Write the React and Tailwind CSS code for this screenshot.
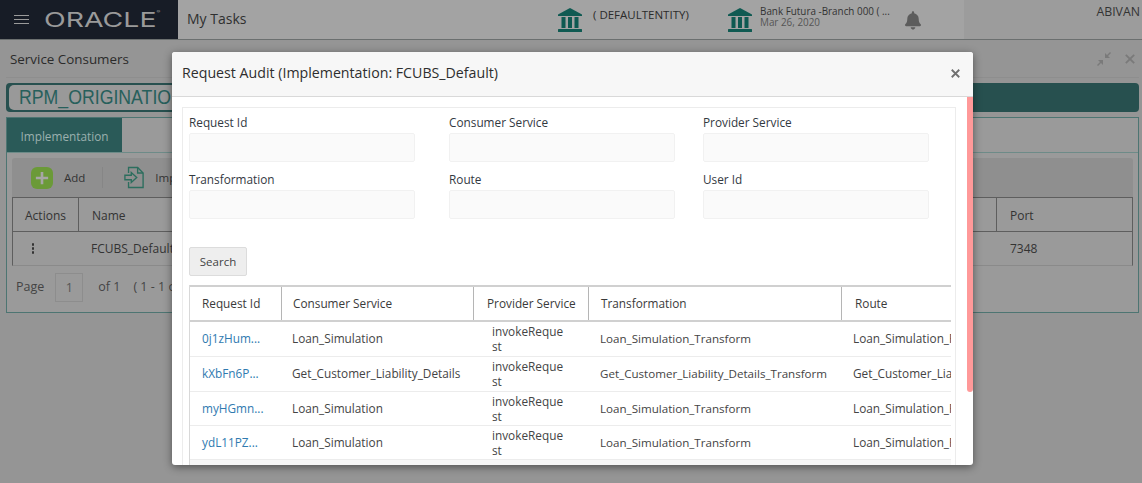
import React from "react";
import { FaBell } from "react-icons/fa";

function Bank({ className }) {
  return (
    <svg viewBox="0 0 26 24" className={className} fill="#0f5a52">
      <path d="M13 0 L25 6.5 V8 H1 V6.5 Z" />
      <rect x="4.5" y="9" width="4" height="11" />
      <rect x="11" y="9" width="4" height="11" />
      <rect x="17.5" y="9" width="4" height="11" />
      <rect x="1" y="21" width="24" height="3" rx="0.5" />
    </svg>
  );
}

const columns = "grid-cols-[91px_192px_115px_253px_110px]";
const rows = [
  ["0j1zHum...", "Loan_Simulation", "Loan_Simulation_Transform", "Loan_Simulation_Route", "h-[35px]"],
  ["kXbFn6P...", "Get_Customer_Liability_Details", "Get_Customer_Liability_Details_Transform", "Get_Customer_Liability", "h-[35px]"],
  ["myHGmn...", "Loan_Simulation", "Loan_Simulation_Transform", "Loan_Simulation_Route", "h-[34px]"],
  ["ydL11PZ...", "Loan_Simulation", "Loan_Simulation_Transform", "Loan_Simulation_Route", "h-[34px]"],
];

function Field({ label }) {
  return (
    <div>
      <div className="h-[21px] pt-[1px] text-[11.8px] leading-[18px] text-[#33393f]">{label}</div>
      <div className="h-[29px] w-[226px] rounded-[2px] border border-[#f1f1f1] bg-[#fafafa]" />
    </div>
  );
}

export default function App() {
  return (
    <div className="relative h-[483px] w-[1142px] overflow-hidden bg-[#959595] font-['Open_Sans',sans-serif] text-[#2b2b2b]">
      <header className="flex h-[40px] border-b border-[#6b6f6f] bg-[#a3a3a3]">
        <div className="flex w-[178px] shrink-0 items-center bg-[#171c26] pl-[14px]">
          <div className="flex w-[15px] flex-col gap-[2.5px]">
            <span className="h-[1.5px] bg-[#9a9a9a]" />
            <span className="h-[1.5px] bg-[#9a9a9a]" />
            <span className="h-[1.5px] bg-[#9a9a9a]" />
          </div>
          <span className="ml-[15px] origin-left scale-x-[1.42] font-['Inter',sans-serif] text-[20px] font-normal leading-none text-[#9a9a9a]">ORACLE<span className="align-top text-[4px]">®</span></span>
        </div>
        <div className="w-[370px] pl-[9px] pt-[8px] text-[14px] leading-[22px] text-[#2f3030]">My Tasks</div>
        <div className="flex w-[179px] items-start pl-[9px] pt-[8px]">
          <Bank className="h-[24px] w-[26px]" />
          <span className="ml-[10px] text-[11.5px] leading-[14px]">( DEFAULTENTITY)</span>
        </div>
        <div className="flex w-[178px] items-start pt-[8px]">
          <Bank className="h-[24px] w-[26px]" />
          <div className="-mt-[2px] ml-[7px] w-[140px] whitespace-nowrap text-[9.9px] leading-[11px] text-[#333]">
            <div>Bank Futura -Branch 000  ( ...</div>
            <div className="text-[#555]">Mar 26, 2020</div>
          </div>
        </div>
        <div className="pt-[11px]">
          <FaBell className="h-[19px] w-[16px] text-[#5c5c5c]" />
        </div>
        <div className="ml-[43px] flex-1 bg-[#9c9c9c] pr-[2px] pt-[4px] text-right text-[12.3px] leading-[16px] text-[#333]">ABIVAN</div>
      </header>

      <main className="flex flex-col pl-[6px] pr-[3px]">
        <div className="flex h-[38px] items-center justify-between border-b border-[#8e8e8e] pl-[4px] pr-[4px]">
          <span className="pt-[2px] text-[13.4px] text-[#2b2b2b]">Service Consumers</span>
          <div className="flex items-center gap-[13px]">
            <svg viewBox="0 0 16 16" className="h-[16px] w-[16px]" fill="#7a7a7a">
              <path d="M9 7 V2 L11 4 L14 1 L15 2 L12 5 L14 7 Z" />
              <path d="M7 9 V14 L5 12 L2 15 L1 14 L4 11 L2 9 Z" />
            </svg>
            <svg viewBox="0 0 12 12" className="h-[10px] w-[10px]" stroke="#7a7a7a" strokeWidth="2.2">
              <path d="M1 1 L11 11 M11 1 L1 11" />
            </svg>
          </div>
        </div>

        <div className="mt-[5px] h-[29px] rounded-[4px] bg-[#27504f] py-[2px] pl-[3px]">
          <div className="h-[25px] w-[300px] rounded-[5px] bg-[#999] pl-[10px] font-['Liberation_Sans',sans-serif] text-[20px] leading-[25px] text-[#27605c]">
            <span className="block origin-left scale-x-[0.885]">RPM_ORIGINATION</span>
          </div>
        </div>

        <section className="mt-[5px] flex h-[196px] flex-col border border-[#4d7572] bg-[#9a9a9a]">
          <div className="h-[35px] border-b border-[#6d8b88]">
            <div className="flex h-[34px] w-[115px] items-center justify-center bg-[#2a5a58] pt-[3px] text-[11.8px] text-[#9bb0ae]">Implementation</div>
          </div>
          <div className="px-[5px] pt-[5px]">
            <div className="flex h-[39px] items-center rounded-t-[3px] bg-[#8f8f8f] pl-[19px]">
              <div className="flex h-[22px] w-[22px] items-center justify-center rounded-[6px] bg-[#6b9a38]">
                <svg viewBox="0 0 16 16" className="h-[14px] w-[14px]" stroke="#a6a6a6" strokeWidth="3"><path d="M8 1 V15 M1 8 H15" /></svg>
              </div>
              <span className="ml-[11px] text-[11.5px] text-[#333]">Add</span>
              <span className="ml-[17px] h-[21px] w-px bg-[#868686]" />
              <svg viewBox="0 0 22 24" className="ml-[21px] h-[23px] w-[20px]" fill="none" stroke="#2c6e5e" strokeWidth="1.5">
                <path d="M5 7 V1 H15 L21 7 V23 H5 V17" />
                <path d="M15 1 V7 H21" />
                <path d="M1 9.5 H8 V6.5 L14 12 L8 17.5 V14.5 H1 Z" />
              </svg>
              <span className="ml-[11px] text-[11.5px] text-[#333]">Import</span>
            </div>
            <div className="flex h-[35px] items-center border border-[#5e5e5e] text-[12px] text-[#333]">
              <div className="flex h-full w-[66px] items-center justify-center border-r border-[#5e5e5e] pt-[2px]">Actions</div>
              <div className="flex-1 pl-[13px] pt-[2px]">Name</div>
              <div className="flex h-full w-[136px] items-center border-l border-[#5e5e5e] pl-[13px] pt-[2px]">Port</div>
            </div>
            <div className="flex h-[34px] items-center border-x border-b border-x-[#5e5e5e] border-b-[#8a8a8a] text-[12px] text-[#333]">
              <div className="flex w-[66px] justify-center pr-[26px]">
                <div className="flex flex-col gap-[1.5px]">
                  <span className="h-[2.5px] w-[2.5px] rounded-full bg-[#333]" />
                  <span className="h-[2.5px] w-[2.5px] rounded-full bg-[#333]" />
                  <span className="h-[2.5px] w-[2.5px] rounded-full bg-[#333]" />
                </div>
              </div>
              <div className="flex-1 pl-[12px]">FCUBS_Default</div>
              <div className="w-[136px] pl-[14px]">7348</div>
            </div>
            <div className="mt-[7px] flex h-[29px] items-center pl-[4px] text-[12.5px] text-[#444]">
              <span>Page</span>
              <span className="ml-[11px] flex h-[29px] w-[28px] items-center justify-center border border-[#8d8d8d] pt-[2px] text-[#555]">1</span>
              <span className="ml-[15px]">of 1</span>
              <span className="ml-[13px]">( 1 - 1 of 1 items )</span>
            </div>
          </div>
        </section>
      </main>

      <div className="absolute left-[172px] top-[52px] flex h-[413px] w-[801px] flex-col overflow-hidden rounded-[3px] bg-white shadow-[0_2px_8px_rgba(0,0,0,0.45)]">
        <div className="flex h-[45px] shrink-0 items-center justify-between border-b border-[#d9d9d9] bg-[#f7f7f7] pb-[2px] pl-[10px] pr-[13px]">
          <span className="text-[14.2px] text-[#2e2e2e]">Request Audit (Implementation: FCUBS_Default)</span>
          <svg viewBox="0 0 12 12" className="h-[9px] w-[9px]" stroke="#707070" strokeWidth="2.4">
            <path d="M1 1 L11 11 M11 1 L1 11" />
          </svg>
        </div>
        <div className="flex min-h-0 flex-1">
          <div className="min-w-0 flex-1 overflow-hidden pl-[10px] pr-[11px] pt-[10px]">
            <div className="h-[400px] border border-[#ececec] pl-[6px] pr-[5px] pt-[4px]">
              <div className="grid grid-cols-[260px_254px_auto] gap-y-[7px]">
                <Field label="Request Id" />
                <Field label="Consumer Service" />
                <Field label="Provider Service" />
                <Field label="Transformation" />
                <Field label="Route" />
                <Field label="User Id" />
              </div>
              <button className="mt-[28px] flex h-[29px] w-[58px] items-center justify-center rounded-[2px] border border-[#dcdcdc] bg-[#eeeeee] text-[11.5px] text-[#444]">Search</button>
              <div className="mt-[9px] w-[762px] overflow-hidden border-l border-[#d8d8d8] text-[11.8px] text-[#444]">
                <div className={`grid ${columns} h-[37px] w-[762px] items-center border-y-2 border-y-[#d0d0d0] text-[#3a3a3a]`}>
                  <div className="pl-[12px]">Request Id</div>
                  <div className="flex h-full items-center border-l border-[#b5b5b5] pl-[11px]">Consumer Service</div>
                  <div className="flex h-full items-center border-l border-[#b5b5b5] pl-[13px]">Provider Service</div>
                  <div className="flex h-full items-center border-l border-[#b5b5b5] pl-[12px]">Transformation</div>
                  <div className="flex h-full items-center border-l border-[#b5b5b5] pl-[13px]">Route</div>
                </div>
                {rows.map((r) => (
                  <div key={r[0]} className={`grid ${columns} ${r[4]} items-center border-b border-[#ececec]`}>
                    <div className="pl-[12px] text-[#2f7ab0]">{r[0]}</div>
                    <div className="whitespace-nowrap pl-[11px]">{r[1]}</div>
                    <div className="pl-[19px] leading-[15px]">invokeReque<br />st</div>
                    <div className="whitespace-nowrap pl-[12px] text-[11.6px]">{r[2]}</div>
                    <div className="overflow-hidden whitespace-nowrap pl-[12px]">{r[3]}</div>
                  </div>
                ))}
                <div className="h-[8px] bg-[#f8f8f8]" />
              </div>
            </div>
          </div>
          <div className="w-[6px] shrink-0">
            <div className="h-[295px] rounded-b-[3px] bg-[#ff9999]" />
          </div>
        </div>
      </div>
    </div>
  );
}
